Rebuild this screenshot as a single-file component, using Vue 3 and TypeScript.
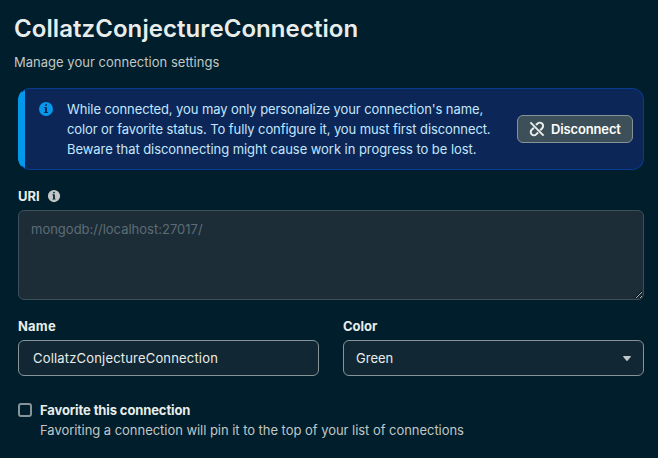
<script setup lang="ts">
import { ref } from 'vue'

const name = ref('CollatzConjectureConnection')
const uri = ref('')
const color = ref('Green')
const favorite = ref(false)
const infoPath =
  'M8 15A7 7 0 1 0 8 1a7 7 0 0 0 0 14ZM9 4a1 1 0 1 1-2 0 1 1 0 0 1 2 0ZM8 6a1 1 0 0 1 1 1v4h.5a.5.5 0 0 1 0 1h-3a.5.5 0 1 1 0-1H7V7h-.5a.5.5 0 0 1 0-1H8Z'
</script>

<template>
  <main class="page">
    <header>
      <h1>{{ name }}</h1>
      <p class="subtitle">Manage your connection settings</p>
    </header>

    <section class="banner">
      <svg class="banner-icon" width="16" height="16" viewBox="0 0 16 16">
        <path :d="infoPath" fill="currentColor" fill-rule="evenodd" />
      </svg>
      <p class="banner-text">
        <span class="l1">While connected, you may only personalize your connection's name,</span><br />
        <span class="l2">color or favorite status. To fully configure it, you must first disconnect.</span><br />
        <span class="l3">Beware that disconnecting might cause work in progress to be lost.</span>
      </p>
      <button class="disconnect" type="button">
        <svg width="16" height="16" viewBox="0 0 16 16" fill="none" stroke="currentColor" stroke-width="2">
          <path d="M1.4 1.4 14.6 14.6" />
          <path d="M6.9 3.9 8.4 2.7a3.2 3.2 0 0 1 4.8 4.5L11.2 9.3" />
          <path d="M4.8 6.7 2.7 8.8a3.2 3.2 0 0 0 4.5 4.6L9.1 11.6" />
        </svg>
        <span>Disconnect</span>
      </button>
    </section>

    <div class="field uri">
      <label class="label" for="uri">
        <span>URI</span>
        <svg width="14" height="14" viewBox="0 0 16 16">
          <path :d="infoPath" fill="currentColor" fill-rule="evenodd" />
        </svg>
      </label>
      <textarea id="uri" v-model="uri" placeholder="mongodb://localhost:27017/" spellcheck="false"></textarea>
    </div>

    <div class="row">
      <div class="field">
        <label class="label name-label" for="name">Name</label>
        <input id="name" v-model="name" class="box" type="text" spellcheck="false" />
      </div>
      <div class="field">
        <span class="label">Color</span>
        <button class="box select" type="button">
          <span>{{ color }}</span>
          <svg width="8" height="5" viewBox="0 0 8 5">
            <path d="M.7 0h6.6c.6 0 .8.5.4.9L4.5 4.7a.7.7 0 0 1-1 0L.3.9C-.1.5.1 0 .7 0Z" fill="currentColor" />
          </svg>
        </button>
      </div>
    </div>

    <label class="favorite">
      <input v-model="favorite" type="checkbox" />
      <span class="fav-title">Favorite this connection</span>
      <span class="fav-desc">Favoriting a connection will pin it to the top of your list of connections</span>
    </label>
  </main>
</template>

<style>
body {
  background: #001e2b;
}
</style>

<style scoped>
.page {
  box-sizing: border-box;
  height: 458px;
  overflow: hidden;
  padding: 13px 14px 0;
  color: #e8edeb;
  background: #001e2b;
  font: 13px/20px Inter, 'Liberation Sans', sans-serif;
}
h1,
p {
  margin: 0;
  white-space: nowrap;
}
h1 {
  font-size: 24px;
  line-height: 32px;
  font-weight: 600;
  letter-spacing: 0.07px;
}
.subtitle {
  margin-top: 7px;
  color: #c1c7c6;
  letter-spacing: 0.02px;
}
.banner {
  box-sizing: border-box;
  display: flex;
  width: 626px;
  height: 82px;
  margin: 16px 0 0 4px;
  padding: 10px 10px 10px 19px;
  border: 1px solid #083c90;
  border-left-color: #0498ec;
  border-radius: 12px;
  color: #c3e7fe;
  background: linear-gradient(to right, #0498ec 7px, #0c2657 7px) border-box;
}
.banner-icon {
  flex: none;
  margin-top: 2px;
  color: #0498ec;
}
.banner-text {
  flex: 1;
  margin-left: 13px;
}
.l1 {
  letter-spacing: -0.095px;
}
.l2 {
  letter-spacing: -0.1px;
}
.l3 {
  letter-spacing: -0.055px;
}
.disconnect {
  box-sizing: border-box;
  display: flex;
  align-items: center;
  align-self: center;
  gap: 6px;
  width: 116px;
  height: 28px;
  padding: 0 0 0 11px;
  border: 1px solid #889397;
  border-radius: 6px;
  color: #fff;
  background: #3d4f58;
  font: 600 13px/20px Inter, sans-serif;
  letter-spacing: -0.14px;
}
.disconnect svg {
  flex: none;
  color: #e8edeb;
}
.uri {
  margin: 16px 0 0 4px;
}
.label {
  display: flex;
  align-items: center;
  height: 20px;
  font-weight: 700;
}
.name-label {
  letter-spacing: 0.2px;
}
.label svg {
  margin-left: 7px;
  color: #c1c7c6;
}
textarea {
  box-sizing: border-box;
  display: block;
  width: 626px;
  height: 90px;
  margin-top: 4px;
  padding: 8px 12px;
  border: 1px solid #3d4f58;
  border-radius: 6px;
  color: #e8edeb;
  background: #1c2d38;
  font: inherit;
  resize: vertical;
  color-scheme: dark;
}
textarea::placeholder {
  color: #5c6c75;
}
.row {
  display: grid;
  grid-template-columns: 301px 301px;
  gap: 24px;
  margin: 16px 0 0 4px;
}
.box {
  box-sizing: border-box;
  display: flex;
  width: 100%;
  height: 36px;
  margin-top: 4px;
  padding: 0 14px;
  border: 1px solid #889397;
  border-radius: 6px;
  color: #e8edeb;
  background: #112733;
  font: inherit;
  letter-spacing: 0.18px;
}
.select {
  align-items: center;
  justify-content: space-between;
  padding: 0 12px;
  letter-spacing: normal;
}
.select svg {
  color: #c1c7c6;
}
.favorite {
  display: grid;
  grid-template-columns: 14px 1fr;
  column-gap: 8px;
  align-items: center;
  margin: 24px 0 0 4px;
  white-space: nowrap;
}
.favorite input {
  box-sizing: border-box;
  width: 14px;
  height: 14px;
  margin: 0;
  border: 2px solid #889397;
  border-radius: 3px;
  appearance: none;
}
.fav-title {
  font-weight: 700;
  letter-spacing: -0.11px;
}
.fav-desc {
  grid-column: 2;
  color: #c1c7c6;
  letter-spacing: -0.04px;
}
</style>
